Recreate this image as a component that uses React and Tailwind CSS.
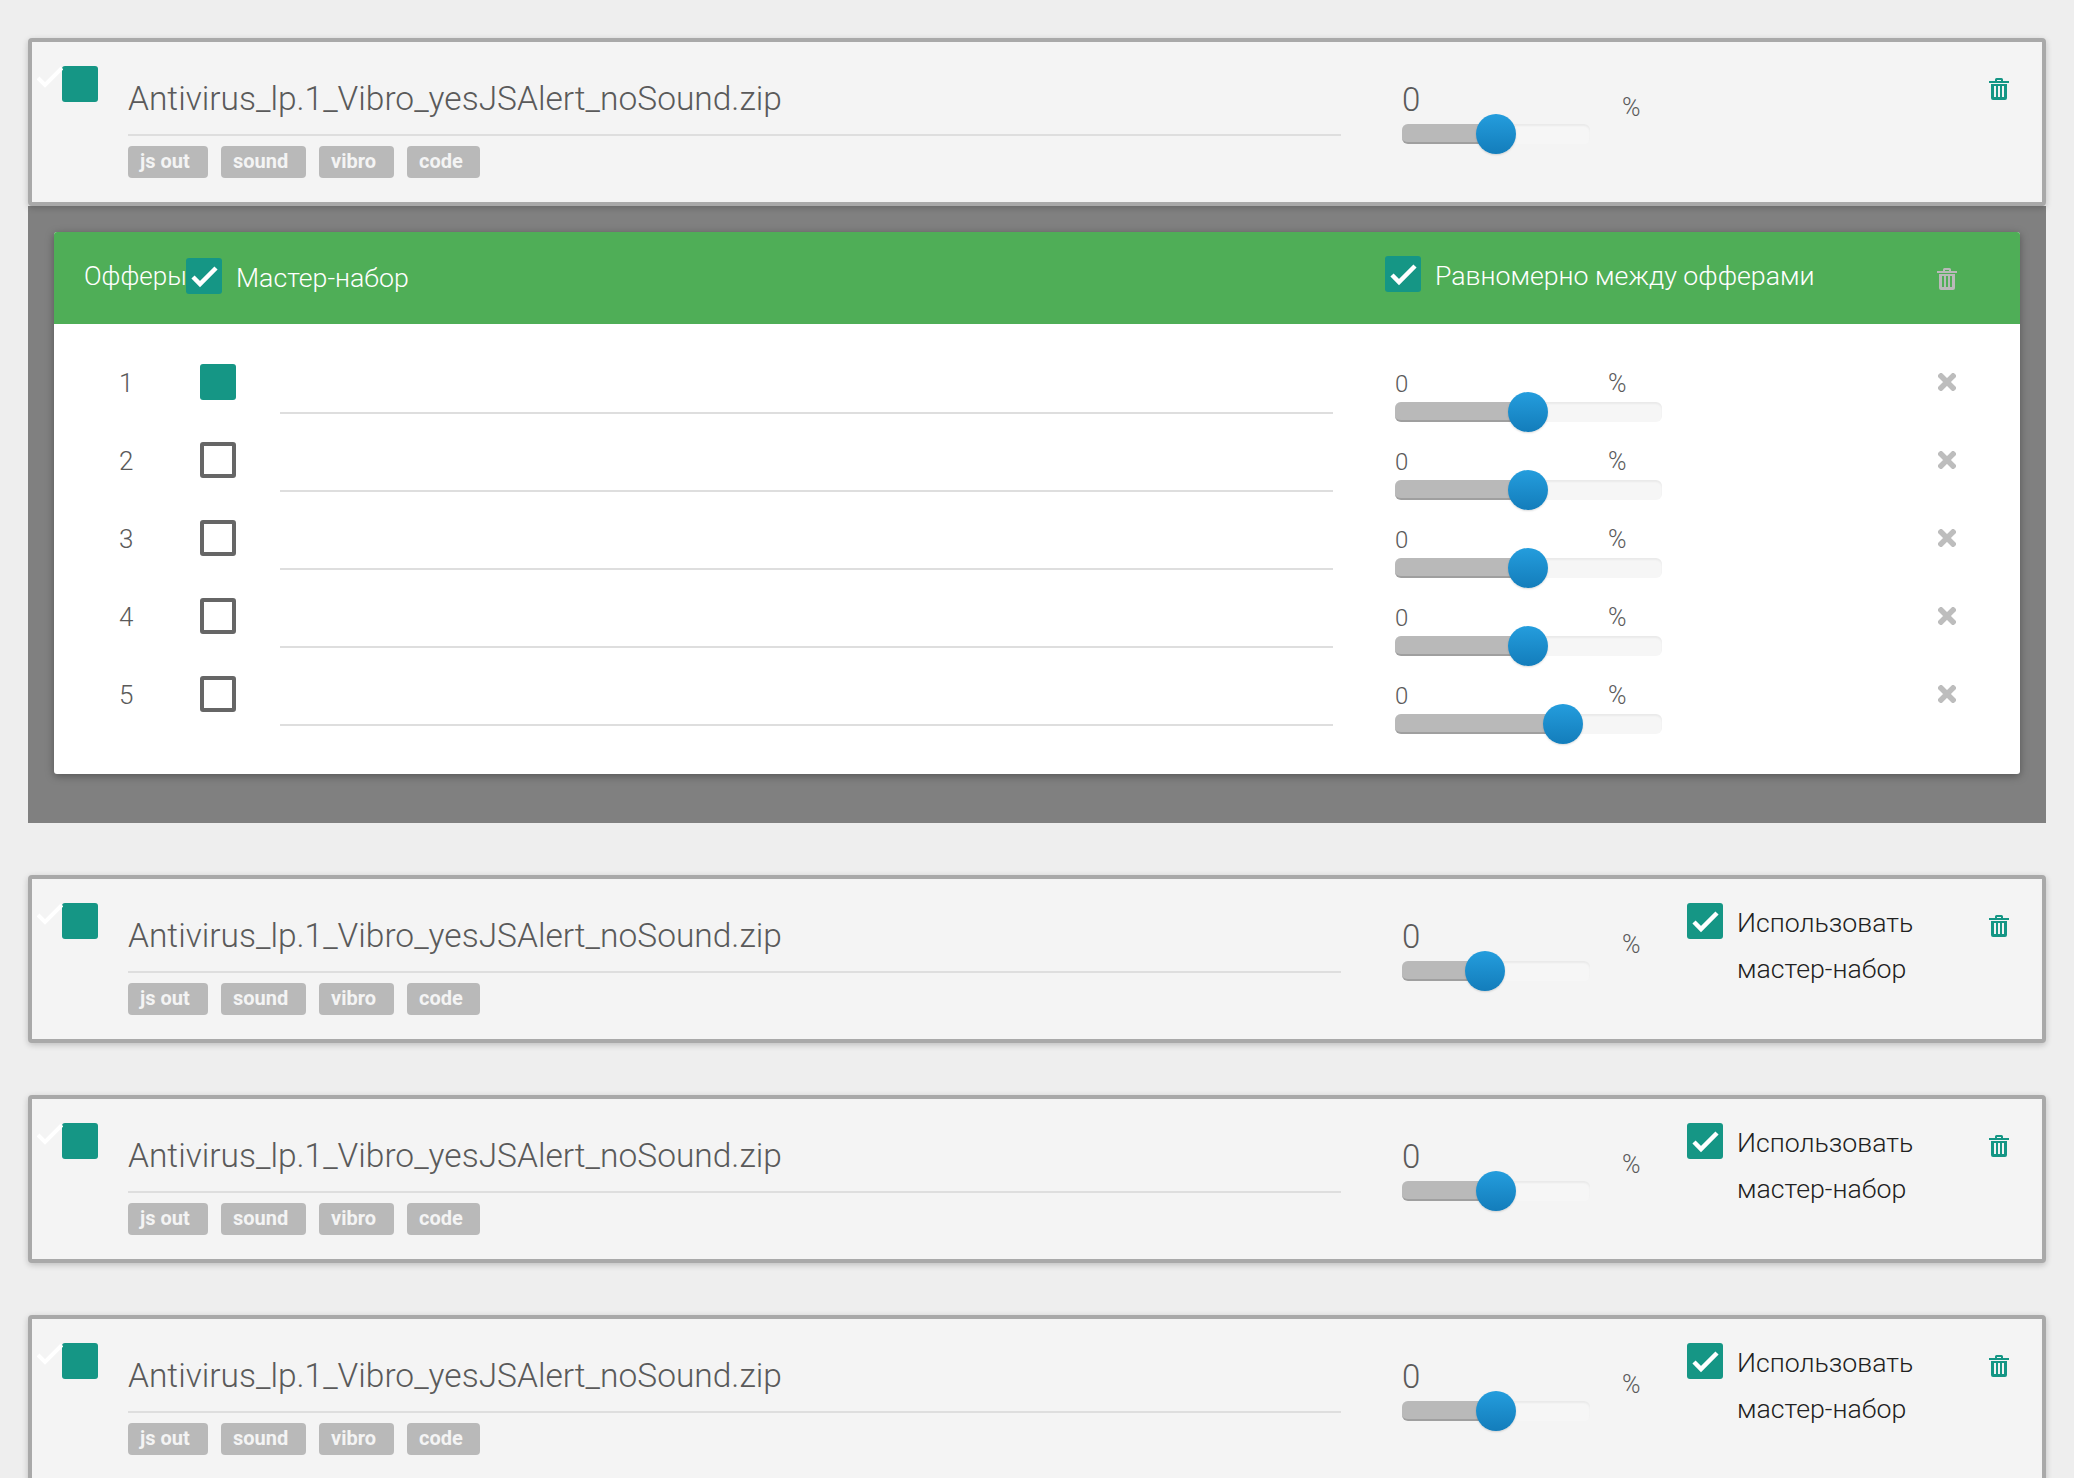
const tags = [
  { label: 'js out', width: 'w-[80px]' },
  { label: 'sound', width: 'w-[85px]' },
  { label: 'vibro', width: 'w-[75px]' },
  { label: 'code', width: 'w-[73px]' },
];

const fileCards = [
  { id: 2, thumb: 63 },
  { id: 3, thumb: 74 },
  { id: 4, thumb: 74 },
];

const offers = [
  { id: 1, checked: true, thumb: 113 },
  { id: 2, checked: false, thumb: 113 },
  { id: 3, checked: false, thumb: 113 },
  { id: 4, checked: false, thumb: 113 },
  { id: 5, checked: false, thumb: 148 },
];

// Trash can, same drawing for the teal and the grey one
const TrashIcon = ({ className }) => (
  <svg width="20" height="23" viewBox="0 0 20 23" className={className} fill="currentColor">
    <path fillRule="evenodd" d="M6 4V2.5A1.5 1.5 0 0 1 7.5 1h5A1.5 1.5 0 0 1 14 2.5V4h6v2H0V4h6zm2 0h4V3H8v1z" />
    <path fillRule="evenodd" d="M2 7h16v14a2 2 0 0 1-2 2H4a2 2 0 0 1-2-2V7zm3 2v11h2V9H5zm4 0v11h2V9H9zm4 0v11h2V9h-2z" />
  </svg>
);

const CloseIcon = ({ className }) => (
  <svg width="18" height="18" viewBox="0 0 18 18" className={className} fill="none" stroke="#bdbdbd" strokeWidth="5.5" strokeLinecap="square">
    <path d="M3 3l12 12M15 3L3 15" />
  </svg>
);

const CheckedBox = ({ className = '' }) => (
  <div className={`relative h-[36px] w-[36px] shrink-0 rounded-[3px] bg-[#159685] ${className}`}>
    <svg width="36" height="36" viewBox="0 0 36 36" fill="none" stroke="#fff" strokeWidth="4.5">
      <path d="M7 19l7 7L30 10" />
    </svg>
  </div>
);

// Filled box with the white tick sticking out to the left
const FilledBox = ({ className = '', tick = false }) => (
  <div className={`relative h-[36px] w-[36px] shrink-0 rounded-[3px] bg-[#159685] ${className}`}>
    {tick && (
      <svg width="26" height="24" viewBox="0 0 26 24" className="absolute left-[-25px] top-0" fill="none" stroke="#fff" strokeWidth="4">
        <path d="M1 12l7 7L25 2" />
      </svg>
    )}
  </div>
);

const Slider = ({ width, thumb }) => (
  <div className={`relative flex h-[20px] ${width} overflow-visible rounded-[6px] bg-[#f6f6f6] shadow-[inset_0_2px_2px_rgba(0,0,0,0.05)]`}>
    <div
      className="h-full rounded-l-[6px] border-b-2 border-[#9f9f9f] bg-[#b9b9b9]"
      style={{ width: thumb + 20 }}
    />
    <div
      className="absolute top-[-10px] h-[40px] w-[40px] rounded-full bg-gradient-to-b from-[#249ddd] to-[#137dbb] shadow-[0_1px_2px_rgba(0,0,0,0.15)]"
      style={{ left: thumb }}
    />
  </div>
);

const FileCard = ({ thumb, master = false, className = '' }) => (
  <div className={`flex h-[168px] w-full rounded-[4px] border-4 border-[#a9a9a9] bg-[#f4f4f4] shadow-[0_2px_6px_rgba(0,0,0,0.2)] ${className}`}>
    <FilledBox tick className="ml-[30px] mt-[24px]" />
    <div className="ml-[30px] w-[1213px] shrink-0">
      <div className="h-[94px] whitespace-nowrap border-b-2 border-[#dedede] pt-[37px] text-[33.5px] font-light leading-[40px] text-[#5a5a5a]">
        Antivirus_lp.1_Vibro_yesJSAlert_noSound.zip
      </div>
      <div className="mt-[10px] flex gap-[13px]">
        {tags.map((tag) => (
          <div
            key={tag.label}
            className={`h-[32px] ${tag.width} rounded-[4px] bg-[#b9b9b9] pl-[12px] text-[20px] font-bold leading-[31px] text-[#f4f4f4]`}
          >
            {tag.label}
          </div>
        ))}
      </div>
    </div>
    <div className="ml-[61px] w-[188px] shrink-0 pt-[38px]">
      <div className="text-[33px] font-light leading-[40px] text-[#5a5a5a]">0</div>
      <div className="mt-[4px]">
        <Slider width="w-[188px]" thumb={thumb} />
      </div>
    </div>
    <div className="ml-[32px] w-[65px] shrink-0 pt-[54px] text-[25px] font-light leading-[24px] text-[#5a5a5a]">%</div>
    {master && (
      <>
        <CheckedBox className="mt-[24px]" />
        <div className="ml-[14px] mt-[21px] text-[26.7px] font-light leading-[46px] text-[#212121]">
          Использовать
          <br />
          мастер-набор
        </div>
      </>
    )}
    <TrashIcon className="ml-auto mr-[33px] mt-[35px] shrink-0 text-[#159685]" />
  </div>
);

const OfferRow = ({ offer }) => (
  <div className="flex h-[78px]">
    <div className="ml-[65px] mt-[27px] w-[81px] shrink-0 text-[26px] font-light leading-[32px] text-[#5a5a5a]">{offer.id}</div>
    {offer.checked ? (
      <FilledBox className="mt-[24px]" />
    ) : (
      <div className="mt-[24px] h-[36px] w-[36px] shrink-0 rounded-[3px] border-4 border-[#666666]" />
    )}
    <div className="ml-[44px] h-[74px] w-[1053px] shrink-0 border-b-2 border-[#dedede]" />
    <div className="ml-[62px] w-[267px] shrink-0 pt-[30px]">
      <div className="flex h-[28px] text-[#5a5a5a]">
        <div className="w-[213px] text-[24px] font-light leading-[28px]">0</div>
        <div className="text-[25px] font-light leading-[28px]">%</div>
      </div>
      <div className="mt-[4px]">
        <Slider width="w-[267px]" thumb={offer.thumb} />
      </div>
    </div>
    <CloseIcon className="ml-auto mr-[64px] mt-[33px] shrink-0" />
  </div>
);

const App = () => {
  return (
    <div className="h-[1478px] w-full overflow-hidden bg-[#eeeeee] px-[28px] pt-[38px] font-['Roboto',sans-serif]">
      <FileCard thumb={74} className="relative z-10" />

      <div className="mb-[52px] h-[617px] bg-[#808080] px-[26px] pt-[26px]">
        <div className="overflow-hidden rounded-[3px] bg-white shadow-[0_2px_8px_rgba(0,0,0,0.35)]">
          <div className="flex h-[92px] bg-[#4fae57] text-white">
            <div className="flex w-[1331px] shrink-0">
              <div className="ml-[30px] mt-[28px] w-[102px] shrink-0 whitespace-nowrap text-[26px] font-light leading-[32px]">Офферы</div>
              <CheckedBox className="mt-[26px]" />
              <div className="ml-[14px] mt-[30px] text-[26.7px] font-light leading-[32px]">Мастер-набор</div>
            </div>
            <CheckedBox className="mt-[24px]" />
            <div className="ml-[14px] mt-[28px] text-[26.7px] font-light leading-[32px]">Равномерно между офферами</div>
            <TrashIcon className="ml-auto mr-[63px] mt-[35px] shrink-0 text-[#b9b9b9]" />
          </div>
          <div className="h-[450px] pt-[16px]">
            {offers.map((offer) => (
              <OfferRow key={offer.id} offer={offer} />
            ))}
          </div>
        </div>
      </div>

      {fileCards.map((card) => (
        <FileCard key={card.id} thumb={card.thumb} master className="mb-[52px]" />
      ))}
    </div>
  );
};

export default App;
